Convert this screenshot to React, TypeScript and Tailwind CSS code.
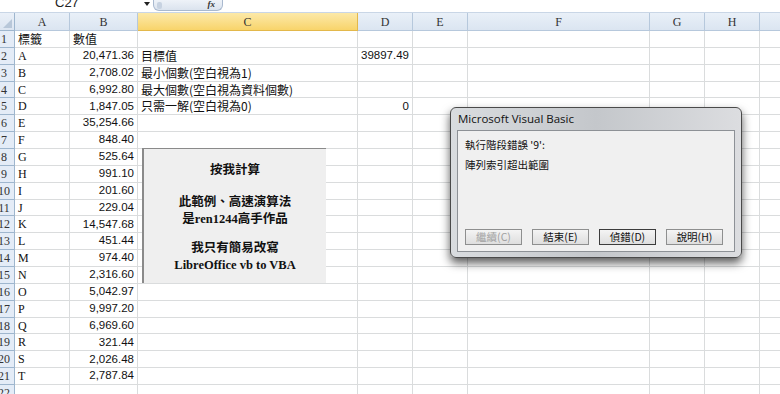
import React from "react";

const CJK = '"Noto Sans CJK TC", "Liberation Sans", sans-serif';
const SERIF_CJK = '"Liberation Serif", "Noto Sans CJK TC", serif';

type Col = { key: string; width: number };

const cols: Col[] = [
  { key: "A", width: 55 },
  { key: "B", width: 68 },
  { key: "C", width: 220 },
  { key: "D", width: 55 },
  { key: "E", width: 55 },
  { key: "F", width: 182 },
  { key: "G", width: 55 },
  { key: "H", width: 55 },
  { key: "I", width: 60 },
];

const data: [string, string, string?, string?][] = [
  ["標籤", "數值"],
  ["A", "20,471.36", "目標值", "39897.49"],
  ["B", "2,708.02", "最小個數(空白視為1)"],
  ["C", "6,992.80", "最大個數(空白視為資料個數)"],
  ["D", "1,847.05", "只需一解(空白視為0)", "0"],
  ["E", "35,254.66"],
  ["F", "848.40"],
  ["G", "525.64"],
  ["H", "991.10"],
  ["I", "201.60"],
  ["J", "229.04"],
  ["K", "14,547.68"],
  ["L", "451.44"],
  ["M", "974.40"],
  ["N", "2,316.60"],
  ["O", "5,042.97"],
  ["P", "9,997.20"],
  ["Q", "6,969.60"],
  ["R", "321.44"],
  ["S", "2,026.48"],
  ["T", "2,787.84"],
  ["", ""],
];

function TopBar() {
  return (
    <div className="h-[13px] bg-white border-b border-[#c9d6e6] flex items-start relative overflow-hidden">
      <div className="w-[141px] h-full relative">
        <span
          className="absolute left-[55px] top-[-7px] text-[13px] text-[#222]"
          style={{ fontFamily: '"Liberation Sans", sans-serif' }}
        >
          C27
        </span>
      </div>
      <div className="w-[12px] flex justify-center pt-[2px]">
        <svg width="6" height="4" viewBox="0 0 6 4">
          <path d="M0 0h6L3 4z" fill="#222" />
        </svg>
      </div>
      <div className="w-[70px] h-[11px] rounded-b-[6px] border border-t-0 border-[#a9b9cf] bg-gradient-to-b from-[#eef2f8] to-[#dbe3ee] flex items-center px-[3px]">
        <div className="w-[5px] h-[7px] rounded-[2px] bg-[#c7d2e1]" />
        <span
          className="ml-auto mr-[4px] text-[9px] italic font-bold text-[#333]"
          style={{ fontFamily: '"Liberation Serif", serif' }}
        >
          fx
        </span>
      </div>
    </div>
  );
}

function HeaderRow() {
  return (
    <div className="flex h-[18px]">
      <div className="w-[15px] shrink-0 bg-gradient-to-b from-[#eaf0f8] to-[#dce5f1] border-r border-b border-[#9eb6ce] flex items-end justify-end">
        <svg width="9" height="9" viewBox="0 0 9 9" className="mr-[2px] mb-[2px]">
          <path d="M9 0v9H0z" fill="#b8c7d9" />
        </svg>
      </div>
      {cols.map((c) => (
        <div
          key={c.key}
          className={`shrink-0 flex items-center justify-center border-r border-b text-[12px] ${
            c.key === "C"
              ? "bg-gradient-to-b from-[#fce9a8] to-[#f8d46a] border-[#e3b84b] text-[#333]"
              : "bg-gradient-to-b from-[#e9f0f8] to-[#dbe5f1] border-[#b6c8dc] text-[#333]"
          }`}
          style={{ width: c.width, fontFamily: '"Liberation Serif", serif' }}
        >
          {c.key}
        </div>
      ))}
    </div>
  );
}

function Row({ n, r }: { n: number; r: [string, string, string?, string?] }) {
  const isHead = n === 1;
  return (
    <div className="flex h-[16.86px]">
      <div className="w-[15px] shrink-0 overflow-hidden bg-[#e4ecf7] border-r border-b border-[#9eb6ce] flex items-center">
        <div
          className="w-[22px] -ml-[7px] shrink-0 text-center text-[12px] text-[#333]"
          style={{ fontFamily: '"Liberation Serif", serif' }}
        >
          {n}
        </div>
      </div>
      {cols.map((c) => {
        let content: React.ReactNode = null;
        let cls = "";
        let font = SERIF_CJK;
        if (c.key === "A") {
          content = r[0];
          cls = "justify-start pl-[3px] text-[12px]";
          font = isHead ? CJK : SERIF_CJK;
        } else if (c.key === "B") {
          content = r[1];
          if (isHead) {
            cls = "justify-start pl-[3px] text-[12px]";
            font = CJK;
          } else {
            cls = "justify-end pr-[3px] text-[11.5px]";
            font = '"Liberation Sans", sans-serif';
          }
        } else if (c.key === "C") {
          content = r[2];
          cls = "justify-start pl-[3px] text-[12px] overflow-visible";
          font = CJK;
        } else if (c.key === "D") {
          content = r[3];
          cls = "justify-end pr-[3px] text-[11.5px]";
          font = '"Liberation Sans", sans-serif';
        }
        return (
          <div
            key={c.key}
            className={`shrink-0 flex items-center whitespace-nowrap border-r border-b border-[#dadcdd] text-[#111] leading-none ${cls}`}
            style={{ width: c.width, fontFamily: font }}
          >
            {content}
          </div>
        );
      })}
    </div>
  );
}

function CalcButton() {
  return (
    <div
      className="absolute z-10 left-[142px] top-[148px] w-[184px] h-[135px] bg-[#efefef] border-l-[2px] border-t border-[#8a8a8a] flex flex-col items-center pt-[13px] text-[12.5px] font-bold text-[#111] leading-[17px]"
      style={{ fontFamily: SERIF_CJK }}
    >
      <div>按我計算</div>
      <div className="h-[15px]" />
      <div>此範例、高速演算法</div>
      <div>是ren1244高手作品</div>
      <div className="h-[12px]" />
      <div>我只有簡易改寫</div>
      <div>LibreOffice vb to VBA</div>
    </div>
  );
}

function DlgButton({ label, disabled, focused }: { label: string; disabled?: boolean; focused?: boolean }) {
  return (
    <div
      className={`w-[57px] h-[16px] flex items-center justify-center text-[10.5px] bg-gradient-to-b from-[#f4f4f4] to-[#dedede] border ${
        focused ? "border-[#3c3c3c]" : "border-[#8e8f8f]"
      } ${disabled ? "text-[#a0a0a0]" : "text-[#111]"}`}
      style={{ fontFamily: CJK }}
    >
      {label}
    </div>
  );
}

function ErrorDialog() {
  return (
    <div className="absolute z-20 left-[450px] top-[107px] w-[292px] h-[151px] rounded-[6px] border border-[#4a4a4a] bg-gradient-to-r from-[#d9dcdf] via-[#c4c7cb] to-[#dcdde0] shadow-[0_5px_10px_rgba(0,0,0,0.65)] flex flex-col px-[6px] pb-[5px]">
      <div
        className="h-[22px] flex items-center pl-[1px] text-[11.5px] text-[#111]"
        style={{ fontFamily: '"Open Sans", "Noto Sans", sans-serif' }}
      >
        Microsoft Visual Basic
      </div>
      <div className="flex-1 bg-[#f0f0f0] border border-[#8d9196] flex flex-col px-[7px] pt-[9px] pb-[6px]" style={{ fontFamily: CJK }}>
        <div className="text-[10.5px] text-[#111] leading-none">執行階段錯誤 '9':</div>
        <div className="text-[10.5px] text-[#111] leading-none mt-[9px]">陣列索引超出範圍</div>
        <div className="mt-auto flex gap-[10px]">
          <DlgButton label="繼續(C)" disabled />
          <DlgButton label="結束(E)" />
          <DlgButton label="偵錯(D)" focused />
          <DlgButton label="說明(H)" />
        </div>
      </div>
    </div>
  );
}

export default function App() {
  return (
    <div className="w-[780px] h-[394px] overflow-hidden bg-white relative">
      <TopBar />
      <HeaderRow />
      {data.map((r, i) => (
        <Row key={i} n={i + 1} r={r} />
      ))}
      <CalcButton />
      <ErrorDialog />
    </div>
  );
}
